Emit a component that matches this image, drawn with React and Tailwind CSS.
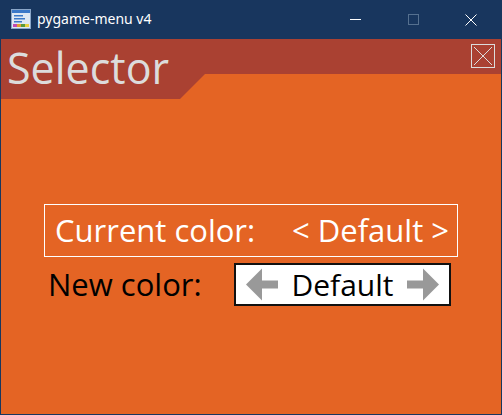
import React from "react";

function PygameIcon() {
  return (
    <svg width="20" height="20" viewBox="0 0 20 20">
      <rect x="0.5" y="0.5" width="19" height="19" fill="#dfe8f3" stroke="#8aa6c8" />
      <rect x="1" y="1" width="18" height="3" fill="#3b78c8" />
      <rect x="3" y="6" width="9" height="1.5" fill="#3b78c8" />
      <rect x="3" y="9" width="11" height="1.5" fill="#3b78c8" />
      <rect x="3" y="12" width="8" height="1.5" fill="#3b78c8" />
      <rect x="2" y="15" width="4" height="3" fill="#c04ab0" />
      <rect x="6" y="15" width="4" height="3" fill="#e0a030" />
      <rect x="10" y="15" width="4" height="3" fill="#5a9a3a" />
      <rect x="14" y="15" width="4" height="3" fill="#e8d040" />
    </svg>
  );
}

function Arrow({ dir }) {
  return (
    <svg width="33" height="33" viewBox="0 0 33 33" className={dir === "right" ? "rotate-180" : ""}>
      <polygon points="0,16.5 16,0.5 16,12.5 32,12.5 32,20.5 16,20.5 16,32.5" fill="#999999" />
    </svg>
  );
}

export default function App() {
  const font = { fontFamily: '"Open Sans", "Noto Sans", sans-serif' };
  return (
    <div className="w-[502px] h-[415px] flex flex-col bg-[#18365e] overflow-hidden" style={font}>
      {/* Title bar */}
      <div className="h-[39px] flex items-center shrink-0">
        <div className="ml-[11px] mt-[-1px]">
          <PygameIcon />
        </div>
        <div className="ml-[6px] text-[14px] text-white leading-none mt-[-2px]" style={{ fontFamily: '"Noto Sans", "Open Sans", sans-serif' }}>
          pygame-menu v4
        </div>
        <div className="flex-1" />
        <div className="w-[46px] flex justify-center items-center mr-[12px]">
          <div className="w-[11px] h-px bg-white" />
        </div>
        <div className="w-[46px] flex justify-center items-center">
          <div className="w-[11px] h-[11px] border border-[#55708f]" />
        </div>
        <div className="w-[46px] flex justify-center items-center ml-[12px]">
          <svg width="12" height="12" viewBox="0 0 12 12">
            <path d="M0.5 0.5 L11.5 11.5 M11.5 0.5 L0.5 11.5" stroke="white" strokeWidth="1" />
          </svg>
        </div>
        <div className="w-[8px]" />
      </div>
      {/* Content */}
      <div className="flex-1 mx-px mb-px bg-[#e46424] flex flex-col">
        <div className="h-[60px] bg-[#aa4132] shrink-0 flex items-start justify-between [clip-path:polygon(0_0,100%_0,100%_35px,204px_35px,179px_60px,0_60px)]">
          <div className="ml-[6px] mt-[7px] text-[43px] leading-none text-[#dcdcdc]">Selector</div>
          <div className="mt-[5px] mr-[6px] w-[24px] h-[24px] border border-[#dcdcdc] flex items-center justify-center">
            <svg width="22" height="22" viewBox="0 0 22 22">
              <path d="M2 2 L20 20 M20 2 L2 20" stroke="#dcdcdc" strokeWidth="1" />
            </svg>
          </div>
        </div>
        <div className="flex-1 flex flex-col items-center pt-[105px]">
          <div className="w-[414px] h-[53px] border border-white flex items-center justify-between pl-[10px] pr-[8px] text-white text-[31px] leading-none">
            <span>Current color:</span>
            <span>&lt; Default &gt;</span>
          </div>
          <div className="mt-[6px] flex items-center w-[403px] ml-[-3px]">
            <span className="text-[31px] leading-none text-black">New color:</span>
            <div className="ml-auto w-[217px] h-[43px] bg-white border-2 border-[#111] flex items-center justify-between px-[10px]">
              <Arrow dir="left" />
              <span className="text-[30px] leading-none text-black">Default</span>
              <Arrow dir="right" />
            </div>
          </div>
        </div>
      </div>
    </div>
  );
}
